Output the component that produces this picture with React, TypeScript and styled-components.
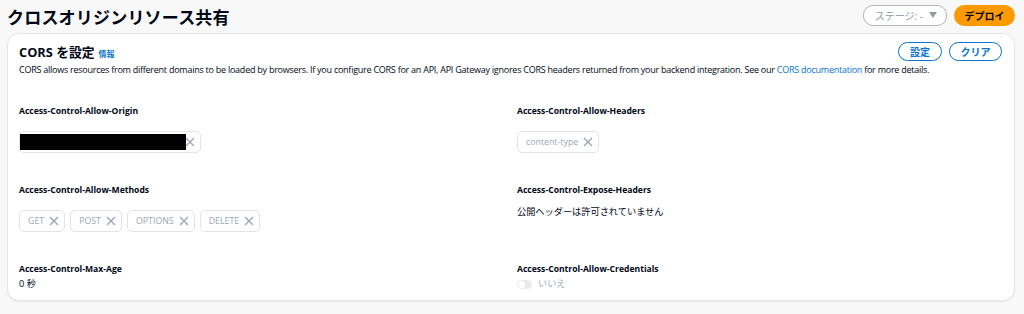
import * as React from "react";
import styled, { createGlobalStyle } from "styled-components";

const GlobalStyle = createGlobalStyle`
  html, body {
    margin: 0;
    padding: 0;
    background: #f8f8f8;
    font-family: "Open Sans", "Noto Sans CJK JP", sans-serif;
    color: #000716;
  }
`;

const Page = styled.div`
  width: 1024px;
  height: 314px;
  padding: 0 9px 0 7px;
  box-sizing: border-box;
`;

const Header = styled.div`
  display: flex;
  align-items: center;
  justify-content: space-between;
  height: 33px;
`;

const Title = styled.h1`
  margin: 0;
  font-size: 17px;
  font-weight: 700;
  letter-spacing: 0.2px;
`;

const HeaderActions = styled.div`
  display: flex;
  gap: 7px;
  align-items: center;
  margin-top: -3px;
`;

const StageSelect = styled.div`
  display: flex;
  align-items: center;
  gap: 6px;
  height: 19px;
  padding: 0 9px 0 11px;
  border: 1px solid #b4b4bb;
  border-radius: 10px;
  font-size: 10px;
  color: #8d99a8;
  background: #fff;
`;

const DeployButton = styled.button`
  height: 21px;
  width: 61px;
  border: none;
  border-radius: 11px;
  background: #ff9900;
  color: #000716;
  font-family: inherit;
  font-size: 10px;
  font-weight: 700;
`;

const Card = styled.section`
  background: #fff;
  border: 1px solid #e4e5e7;
  border-radius: 12px;
  box-shadow: 0 1px 2px rgba(0, 7, 22, 0.06);
  padding: 8px 11px 11px 11px;
  height: 268px;
  box-sizing: border-box;
`;

const CardHead = styled.div`
  display: flex;
  justify-content: space-between;
  align-items: center;
`;

const CardTitle = styled.h2`
  margin: 0;
  font-size: 12.8px;
  font-weight: 700;
  display: flex;
  align-items: baseline;
  gap: 4px;
`;

const InfoLink = styled.a`
  font-size: 8px;
  font-weight: 700;
  color: #0972d3;
`;

const CardButtons = styled.div`
  display: flex;
  gap: 7px;
  margin-right: 1px;
`;

const OutlineButton = styled.button<{ $w: number }>`
  width: ${(p) => p.$w}px;
  height: 19px;
  border: 1.5px solid #0972d3;
  border-radius: 10px;
  background: #fff;
  color: #0972d3;
  font-family: inherit;
  font-size: 10px;
  font-weight: 700;
  padding: 0;
`;

const Description = styled.p`
  margin: 2px 0 0;
  font-size: 9px;
  letter-spacing: -0.25px;
  line-height: 14px;
  color: #000716;
  white-space: nowrap;
`;

const Link = styled.a`
  color: #0972d3;
`;

const Grid = styled.div`
  display: grid;
  grid-template-columns: 498px 1fr;
  grid-template-rows: 79px 79px auto;
  margin-top: 28px;
`;

const Field = styled.div`
  display: flex;
  flex-direction: column;
`;

const Label = styled.div`
  font-size: 8.6px;
  font-weight: 700;
  line-height: 12px;
`;

const Tokens = styled.div`
  display: flex;
  gap: 5px;
  margin-top: 14px;
`;

const Token = styled.div`
  display: flex;
  align-items: center;
  gap: 5px;
  height: 20px;
  padding: 0 5px 0 8px;
  border: 1px solid #e1e3e6;
  border-radius: 5px;
  font-size: 8.8px;
  color: #9ba7b6;
`;

const Redacted = styled.div`
  width: 166px;
  height: 16px;
  background: #000;
  margin-left: -8px;
  margin-right: -6px;
`;

const Value = styled.div<{ $muted?: boolean; $gap: number }>`
  font-size: 9.2px;
  line-height: 14px;
  margin-top: ${(p) => p.$gap}px;
  color: ${(p) => (p.$muted ? "#9ba7b6" : "#000716")};
  display: flex;
  align-items: center;
  gap: 6px;
`;

const Toggle = styled.span`
  position: relative;
  width: 15px;
  height: 9px;
  border-radius: 5px;
  background: #e9ebed;
  &::after {
    content: "";
    position: absolute;
    left: 1px;
    top: 1px;
    width: 7px;
    height: 7px;
    border-radius: 50%;
    background: #fff;
  }
`;

const Close = () => (
  <svg width="10" height="10" viewBox="0 0 10 10">
    <path d="M1 1 L9 9 M9 1 L1 9" stroke="#9ba7b6" strokeWidth="1.4" />
  </svg>
);

const Caret = () => (
  <svg width="8" height="6" viewBox="0 0 8 6">
    <path d="M0 0 H8 L4 6 Z" fill="#8d99a8" />
  </svg>
);

const methods = ["GET", "POST", "OPTIONS", "DELETE"];

export default function App() {
  return (
    <Page>
      <GlobalStyle />
      <Header>
        <Title>クロスオリジンリソース共有</Title>
        <HeaderActions>
          <StageSelect>
            ステージ: - <Caret />
          </StageSelect>
          <DeployButton>デプロイ</DeployButton>
        </HeaderActions>
      </Header>
      <Card>
        <CardHead>
          <CardTitle>
            CORS を設定 <InfoLink>情報</InfoLink>
          </CardTitle>
          <CardButtons>
            <OutlineButton $w={44}>設定</OutlineButton>
            <OutlineButton $w={53}>クリア</OutlineButton>
          </CardButtons>
        </CardHead>
        <Description>
          CORS allows resources from different domains to be loaded by browsers. If you configure CORS for an API, API
          Gateway ignores CORS headers returned from your backend integration. See our{" "}
          <Link>CORS documentation</Link> for more details.
        </Description>
        <Grid>
          <Field>
            <Label>Access-Control-Allow-Origin</Label>
            <Tokens>
              <Token>
                <Redacted />
                <Close />
              </Token>
            </Tokens>
          </Field>
          <Field>
            <Label>Access-Control-Allow-Headers</Label>
            <Tokens>
              <Token>
                content-type <Close />
              </Token>
            </Tokens>
          </Field>
          <Field>
            <Label>Access-Control-Allow-Methods</Label>
            <Tokens>
              {methods.map((m) => (
                <Token key={m}>
                  {m} <Close />
                </Token>
              ))}
            </Tokens>
          </Field>
          <Field>
            <Label>Access-Control-Expose-Headers</Label>
            <Value $gap={9}>公開ヘッダーは許可されていません</Value>
          </Field>
          <Field>
            <Label>Access-Control-Max-Age</Label>
            <Value $gap={2}>0 秒</Value>
          </Field>
          <Field>
            <Label>Access-Control-Allow-Credentials</Label>
            <Value $muted $gap={2}>
              <Toggle />
              いいえ
            </Value>
          </Field>
        </Grid>
      </Card>
    </Page>
  );
}
